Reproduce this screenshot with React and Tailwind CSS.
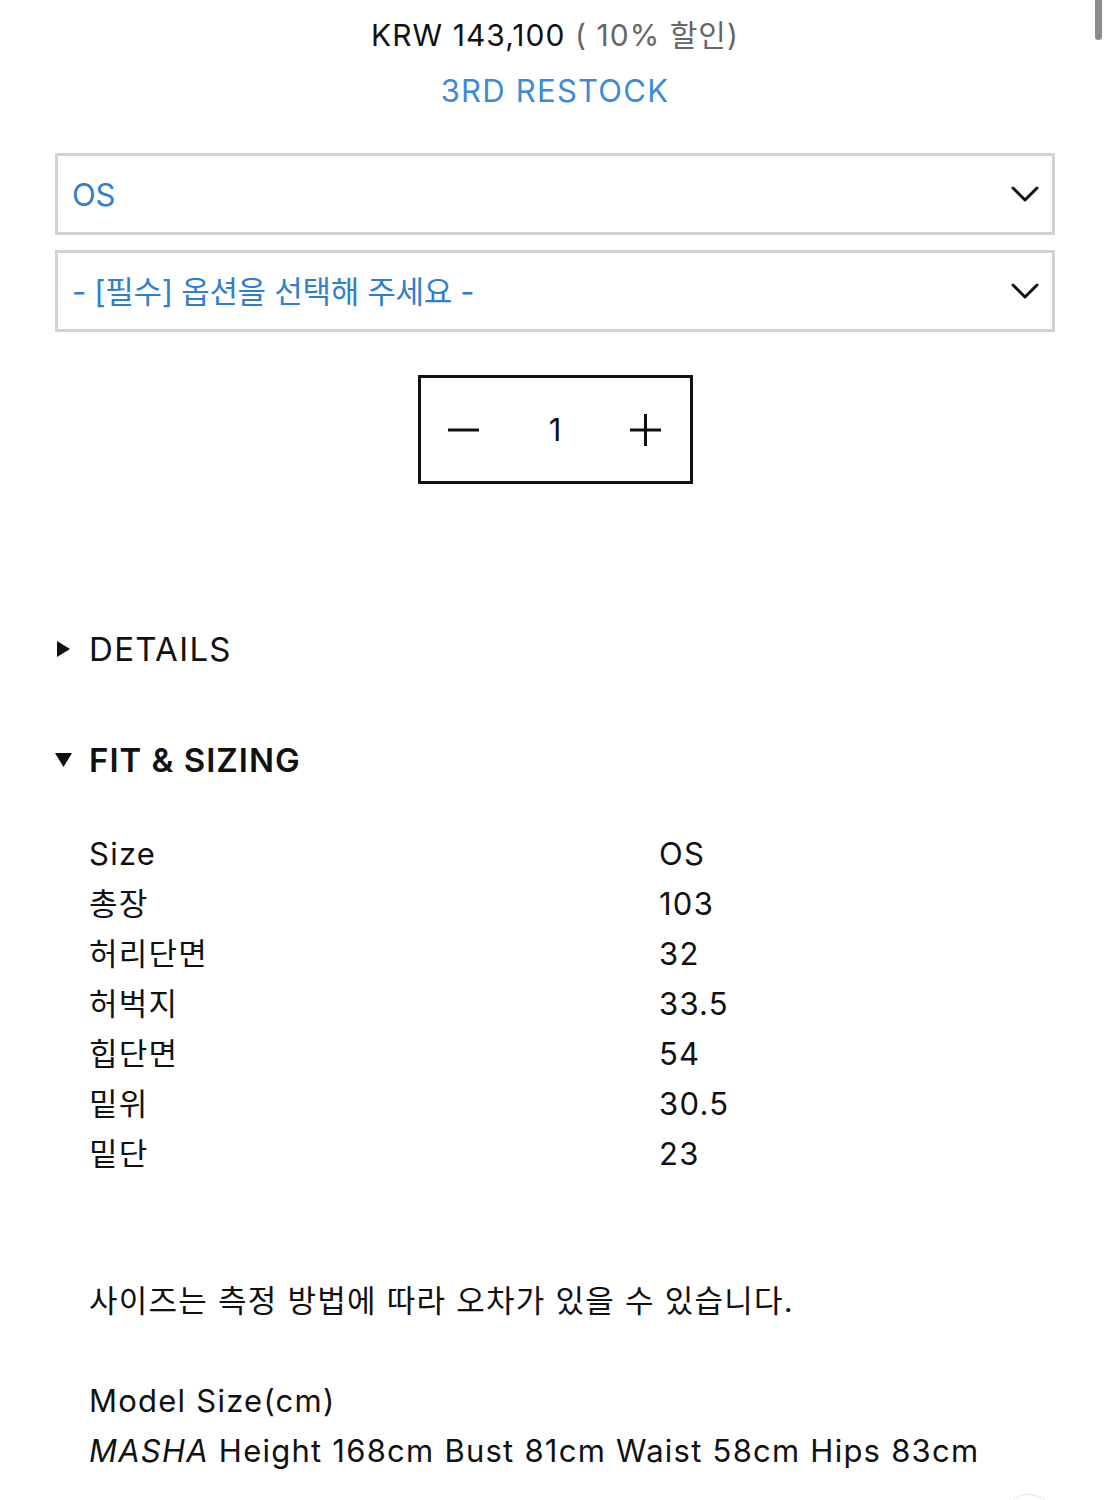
const rows = [
  ["Size", "OS"],
  ["총장", "103"],
  ["허리단면", "32"],
  ["허벅지", "33.5"],
  ["힙단면", "54"],
  ["밑위", "30.5"],
  ["밑단", "23"],
];

function Chevron() {
  return (
    <svg width="30" height="20" viewBox="0 0 30 20" fill="none" stroke="#111" strokeWidth="3" strokeLinecap="round" strokeLinejoin="round">
      <path d="M3 4 L15 16 L27 4" />
    </svg>
  );
}

function Select({ label }) {
  return (
    <div className="flex h-[82px] w-[1000px] items-center justify-between border-[3px] border-[#d2d2d2] bg-white pl-[14px] pr-[12px]">
      <span className="text-[31px] leading-none tracking-[-0.01em] text-[#2f7fd1]">{label}</span>
      <Chevron />
    </div>
  );
}

export default function App() {
  return (
    <div className="relative h-[1500px] w-[1110px] overflow-hidden bg-white font-['Inter','Noto_Sans_CJK_KR',sans-serif] text-[#111]">
      <div className="absolute right-[8px] top-0 h-[40px] w-[7px] rounded-b-full bg-[#8a8a8a]" />
      <div className="absolute left-[1004px] top-[1494px] h-[50px] w-[50px] rounded-full border border-[#e6e6e6]" />

      <div className="pt-[8px] text-center text-[30px] leading-[55px] tracking-[0.035em]">
        <div>
          KRW 143,100 <span className="text-[#666]">( 10% 할인)</span>
        </div>
        <div className="text-[31px] tracking-[0.04em] text-[#3d8ad8]">3RD RESTOCK</div>
      </div>

      <div className="ml-[55px] mt-[35px] flex flex-col gap-[15px]">
        <Select label="OS" />
        <Select label="- [필수] 옵션을 선택해 주세요 -" />
      </div>

      <div className="mx-auto mt-[43px] flex h-[109px] w-[275px] items-center justify-between border-[3px] border-[#111] px-[27px]">
        <svg width="32" height="32" viewBox="0 0 32 32" stroke="#111" strokeWidth="3">
          <path d="M0 16 H31" />
        </svg>
        <span className="text-[31px] leading-none">1</span>
        <svg width="32" height="32" viewBox="0 0 32 32" stroke="#111" strokeWidth="3">
          <path d="M0 16 H31 M15.5 0 V32" />
        </svg>
      </div>

      <div className="ml-[55px] mt-[140px] flex h-[50px] items-center">
        <div className="flex w-[34px] items-center pl-[2px]">
          <svg width="13" height="16" viewBox="0 0 13 16">
            <path d="M0 0 L13 8 L0 16 Z" fill="#111" />
          </svg>
        </div>
        <span className="text-[33px] leading-[50px] tracking-[0.04em]">DETAILS</span>
      </div>

      <div className="ml-[55px] mt-[61px] flex h-[50px] items-center">
        <div className="flex w-[34px] items-center">
          <svg width="17" height="14" viewBox="0 0 17 14">
            <path d="M0 0 H17 L8.5 14 Z" fill="#111" />
          </svg>
        </div>
        <span className="text-[33px] font-semibold leading-[50px] tracking-[0.03em]">FIT &amp; SIZING</span>
      </div>

      <div className="ml-[89px] mt-[44px] grid grid-cols-[570px_1fr] text-[31px] leading-[50px] tracking-[0.04em]">
        {rows.map(([k, v]) => (
          <div key={k} className="contents">
            <div>{k}</div>
            <div>{v}</div>
          </div>
        ))}
      </div>

      <div className="ml-[89px] mt-[97px] text-[31px] leading-[50px] tracking-[0.04em]">
        <div>사이즈는 측정 방법에 따라 오차가 있을 수 있습니다.</div>
        <div className="h-[50px]" />
        <div>Model Size(cm)</div>
        <div>
          <i>MASHA</i> Height 168cm Bust 81cm Waist 58cm Hips 83cm
        </div>
      </div>
    </div>
  );
}
